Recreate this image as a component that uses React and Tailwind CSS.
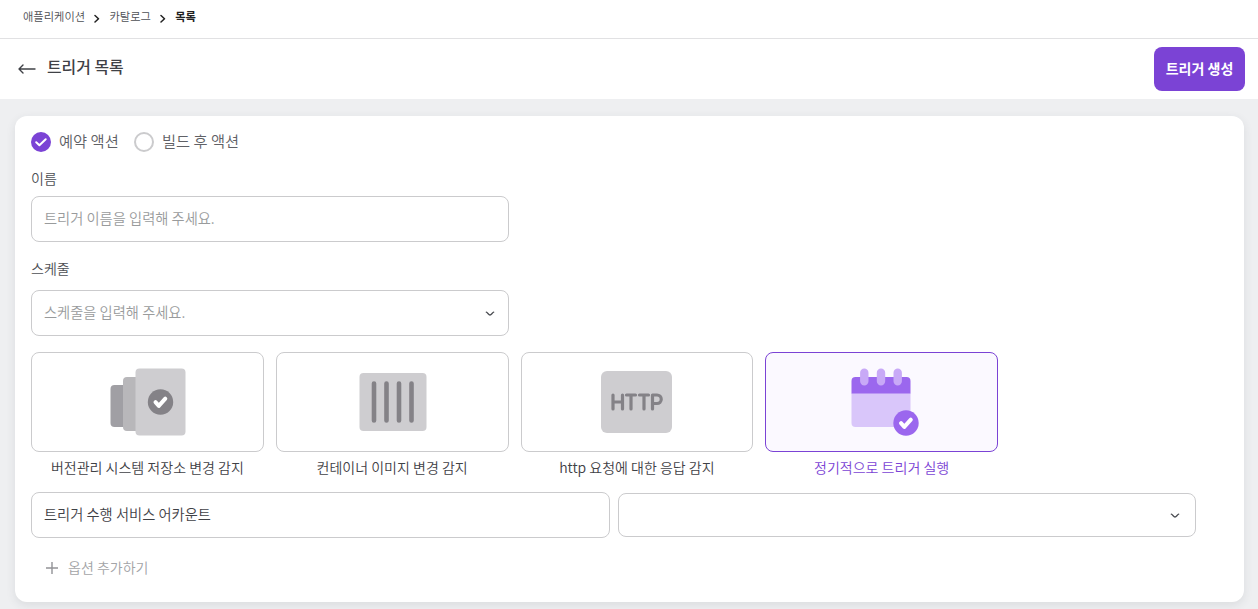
const Chevron = ({ className }) => (
  <svg className={className} viewBox="0 0 10 6" fill="none" stroke="#4d4f54" strokeWidth="1.3" strokeLinecap="round" strokeLinejoin="round">
    <path d="M1.300 1.200C2.600 1.500 3.500 4 5 4S7.400 1.500 8.700 1.200" />
  </svg>
);

const Separator = () => (
  <svg className="mt-[3px] h-[9px] w-[6px]" viewBox="0 0 6 9" fill="none" stroke="#222" strokeWidth="1.5" strokeLinecap="round" strokeLinejoin="round">
    <path d="M1 1.500l3.500 3.200L1 8" />
  </svg>
);

const RepositoryIcon = () => (
  <svg className="ml-px" width="76" height="68" viewBox="0 0 76 68">
    <rect x="0.500" y="17" width="20" height="42" rx="4" fill="#a09fa4" />
    <rect x="13" y="9" width="20" height="54" rx="4" fill="#b8b7ba" />
    <rect x="25.500" y="0.500" width="50" height="67" rx="4" fill="#cecdd0" />
    <circle cx="50.500" cy="34" r="12.700" fill="#848287" />
    <path d="M45.500 34.200l3.300 3.700 6.500-7.200" fill="none" stroke="#fff" strokeWidth="4" strokeLinecap="round" strokeLinejoin="round" />
  </svg>
);

const ContainerIcon = () => (
  <svg className="ml-px" width="68" height="60" viewBox="0 0 68 60">
    <rect x="0.500" y="1" width="67" height="58" rx="4" fill="#cecdd0" />
    <path d="M15 11.500v37M27.500 11.500v37M40 11.500v37M52.500 11.500v37" stroke="#848287" strokeWidth="4.600" strokeLinecap="round" />
  </svg>
);

const HttpIcon = () => (
  <div className="flex h-[62px] w-[71px] items-center justify-center rounded-[6px] bg-[#cecdd0]">
    <svg width="52" height="18" viewBox="0 0 52 18" fill="none" stroke="#848287" strokeWidth="3.200" strokeLinecap="round" strokeLinejoin="round">
      <path d="M2 2v14M11.500 2v14M2 9H11.500M15.500 2h9M20 2v14M28.500 2h9M33 2v14M41.500 16V2h4.500a4 4 0 0 1 0 8.500H41.500" />
    </svg>
  </div>
);

const CalendarIcon = () => (
  <svg className="ml-[7px]" width="68" height="68" viewBox="0 0 68 68">
    <path d="M0.500 25h59v30a4 4 0 0 1-4 4h-51a4 4 0 0 1-4-4z" fill="#d9c6fa" />
    <path d="M0.500 25.500V13a4 4 0 0 1 4-4h51a4 4 0 0 1 4 4v12.500z" fill="#9b67ee" />
    <path d="M13.300 4.700v8.600M30 4.700v8.600M46.700 4.700v8.600" stroke="#c8a9f7" strokeWidth="8.400" strokeLinecap="round" />
    <circle cx="55" cy="55" r="12.700" fill="#9b67ee" />
    <path d="M50 55.200l3.300 3.700 6.500-7.200" fill="none" stroke="#fff" strokeWidth="4" strokeLinecap="round" strokeLinejoin="round" />
  </svg>
);

const triggers = [
  { label: "버전관리 시스템 저장소 변경 감지", Icon: RepositoryIcon },
  { label: "컨테이너 이미지 변경 감지", Icon: ContainerIcon },
  { label: "http 요청에 대한 응답 감지", Icon: HttpIcon },
  { label: "정기적으로 트리거 실행", Icon: CalendarIcon, selected: true },
];

export default function App() {
  return (
    <div className="flex h-[609px] flex-col overflow-hidden bg-[#eeeff1] font-['Noto_Sans_CJK_KR','Noto_Sans_CJK_JP','Noto_Sans',sans-serif] text-sm font-[350] text-[#3f4146]">
      <nav className="flex h-[39px] shrink-0 items-start gap-[9.200px] border-b border-[#e1e1e3] bg-white pt-[8px] pl-[23px] text-[11.250px] leading-4 text-[#4d4f54]">
        <span>애플리케이션</span>
        <span className="pt-[3px]"><Separator /></span>
        <span>카탈로그</span>
        <span className="pt-[3px]"><Separator /></span>
        <span className="font-bold text-[#222]">목록</span>
      </nav>

      <header className="flex h-[60px] shrink-0 items-center justify-between bg-white pr-[13px] pl-[18px]">
        <div className="flex items-center gap-[11px]">
          <svg className="h-[10px] w-[18px]" viewBox="0 0 18 10" fill="none" stroke="#3f4146" strokeWidth="1.400" strokeLinecap="round" strokeLinejoin="round">
            <path d="M17 5H1M5 1L1 5l4 4" />
          </svg>
          <h1 className="-mt-[4px] text-[15.900px] leading-6 font-medium">트리거 목록</h1>
        </div>
        <button className="h-[44px] w-[91px] rounded-lg bg-[#7b43d5] pb-[2px] text-sm font-bold text-white">트리거 생성</button>
      </header>

      <main className="mx-[15px] mt-[17px] mr-[14px] h-[486px] shrink-0 rounded-xl bg-white px-4 pt-4 shadow-[0_3px_10px_rgba(50,55,65,0.100)]">
        <div className="flex h-5 items-center text-[15.300px] text-[#606166]">
          <svg className="mr-2 h-5 w-5" viewBox="0 0 20 20">
            <circle cx="10" cy="10" r="10" fill="#7b43d5" />
            <path d="M5.200 10.300l3.200 3 6.300-6.100" fill="none" stroke="#fff" strokeWidth="2" strokeLinecap="round" strokeLinejoin="round" />
          </svg>
          <span className="-mt-[2px] w-[75px]">예약 액션</span>
          <span className="mr-2 h-5 w-5 rounded-full border-2 border-[#cbcbcd]" />
          <span className="-mt-[2px]">빌드 후 액션</span>
        </div>

        <label className="mt-[16px] block h-[28px] leading-5 text-[#4d4f54]">이름</label>
        <div className="flex h-[46px] w-[478px] items-center rounded-lg border border-[#cbcbcd] px-3 pb-[2px] text-[14.250px] text-[#999b9c]">트리거 이름을 입력해 주세요.</div>

        <label className="mt-[16px] block h-[32px] leading-5 text-[#4d4f54]">스케줄</label>
        <div className="flex h-[46px] w-[478px] items-center justify-between rounded-lg border border-[#cbcbcd] pr-[13px] pl-3 text-[14.250px] text-[#999b9c]">
          <span className="-mt-[2px]">스케줄을 입력해 주세요.</span>
          <Chevron className="mt-[1px] h-[6px] w-[10px]" />
        </div>

        <div className="mt-4 grid w-[967px] grid-cols-4 gap-3">
          {triggers.map(({ label, Icon, selected }) => (
            <div key={label} className="text-center">
              <div className={`flex h-[100px] items-center justify-center rounded-lg border ${selected ? "border-[#7b43d5] bg-[#fbf9ff]" : "border-[#cbcbcd]"}`}>
                <Icon />
              </div>
              <div className={`mt-[5px] h-[21px] leading-5 ${selected ? "text-[#7b43d5]" : ""}`}>{label}</div>
            </div>
          ))}
        </div>

        <div className="mt-[14px] flex items-center gap-2">
          <div className="flex h-[46px] w-[579px] items-center rounded-lg border border-[#cbcbcd] px-3 pb-[2px] text-[14.250px]">트리거 수행 서비스 어카운트</div>
          <div className="flex h-[44px] w-[578px] items-center justify-end rounded-lg border border-[#cbcbcd] pr-[15px]">
            <Chevron className="mt-[1px] h-[6px] w-[10px]" />
          </div>
        </div>

        <button className="mt-5 ml-[15px] flex h-5 items-center gap-[10px] leading-5 text-[#a3a4a7]">
          <svg className="h-3 w-3" viewBox="0 0 12 12" stroke="#929397" strokeWidth="1.400">
            <path d="M6 0v12M0 6h12" />
          </svg>
          <span className="-mt-[2px]">옵션 추가하기</span>
        </button>
      </main>
    </div>
  );
}
